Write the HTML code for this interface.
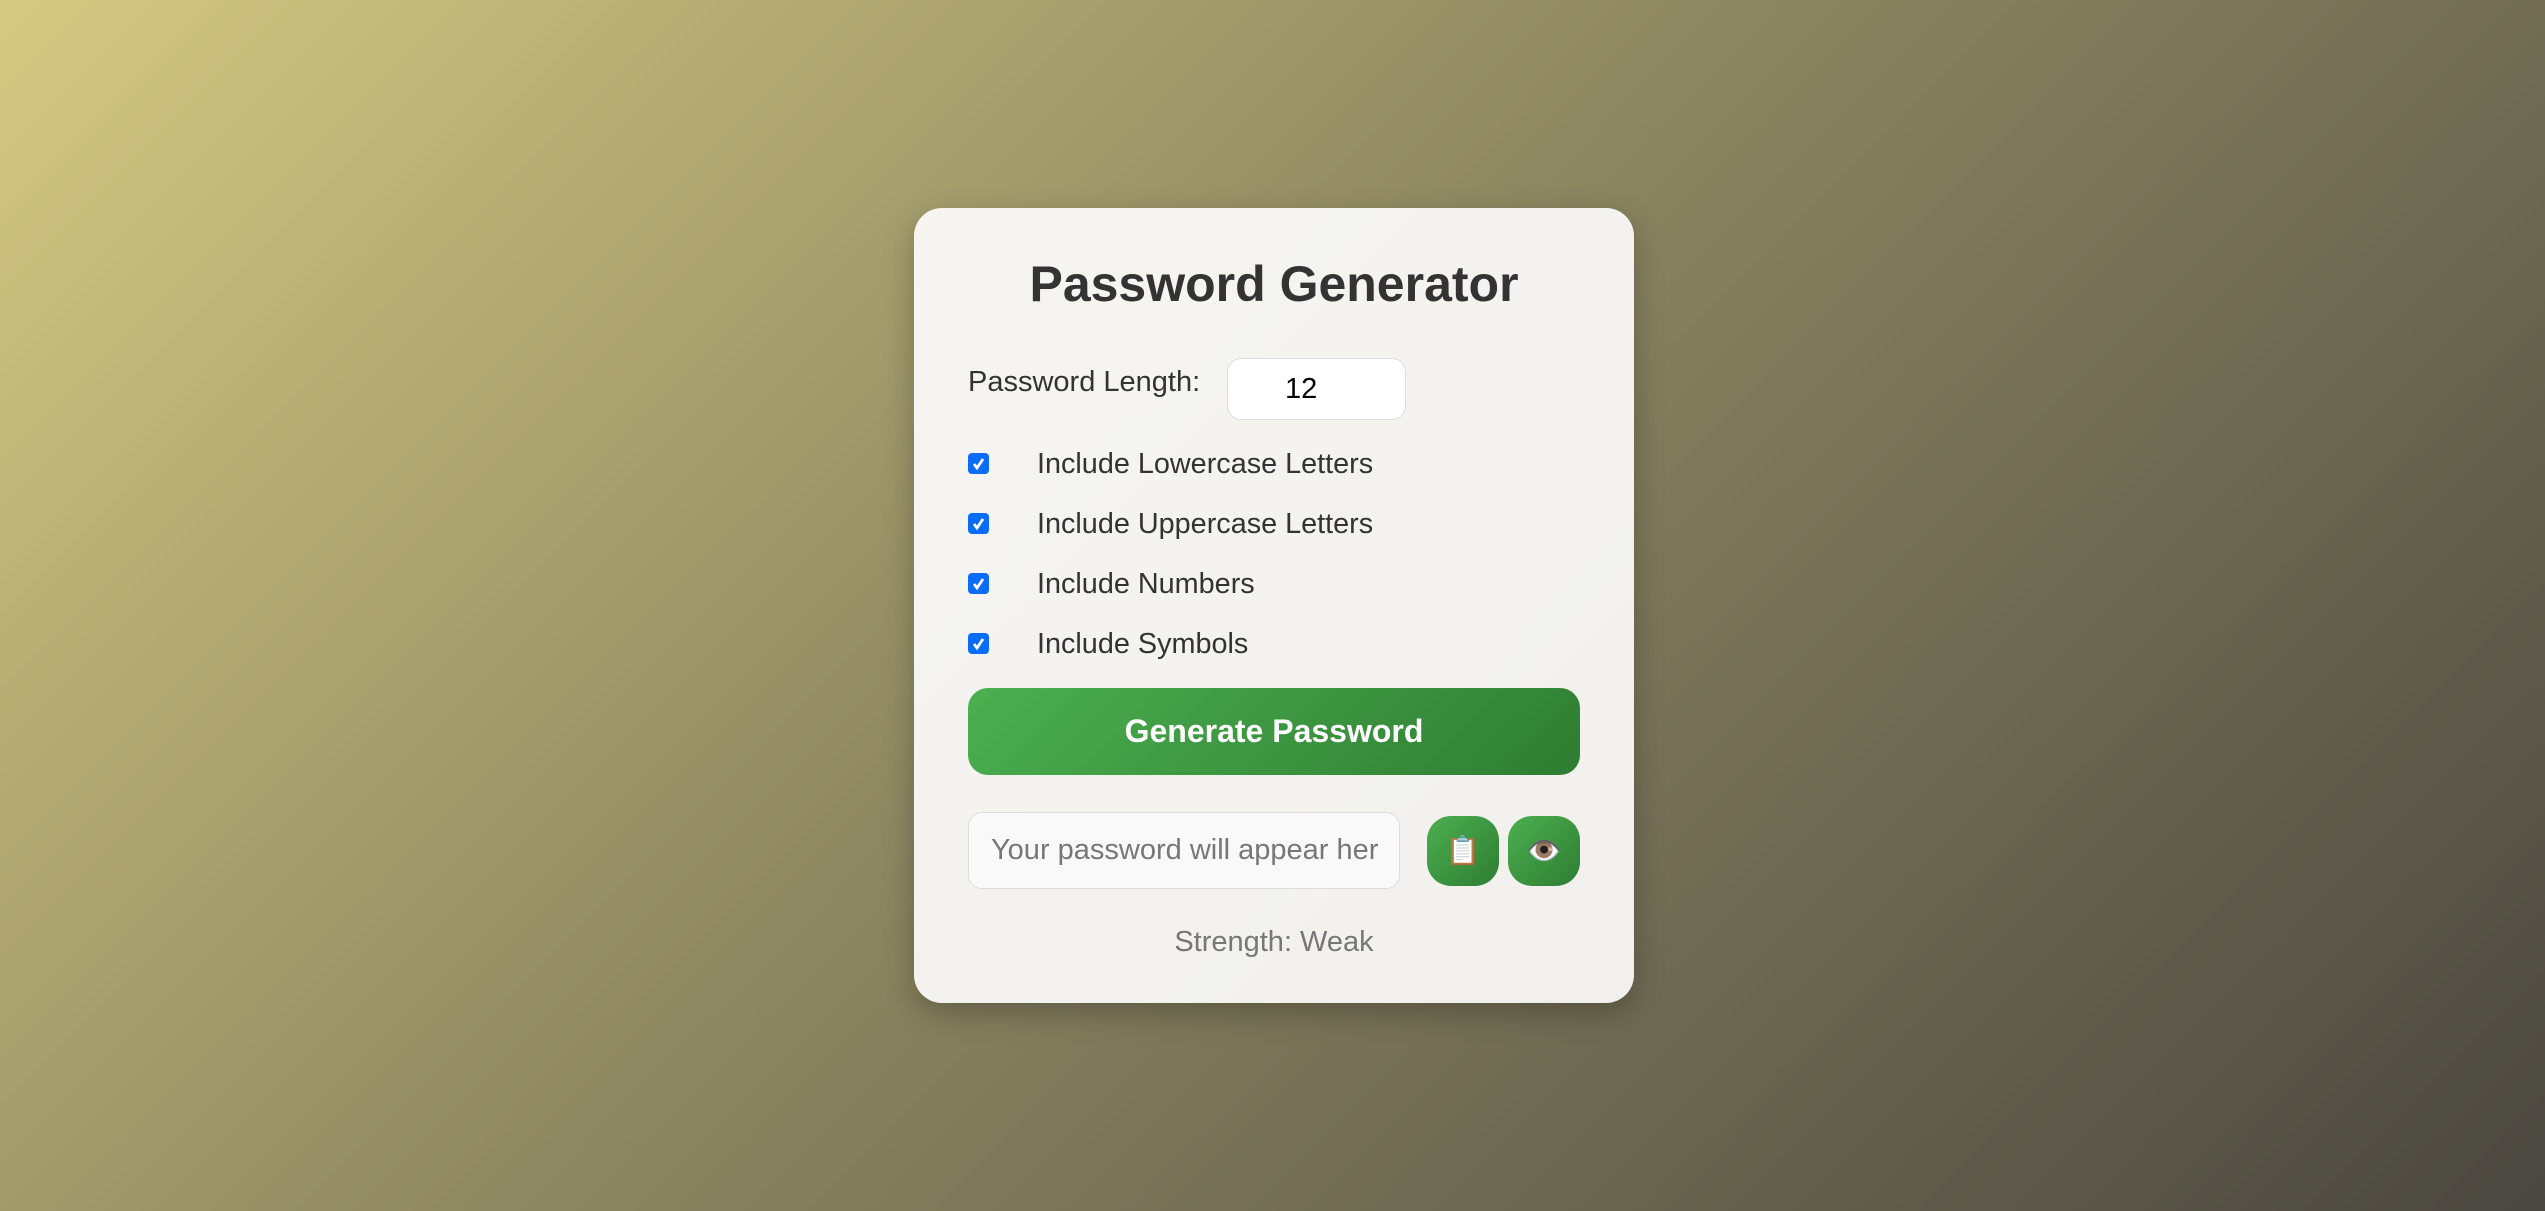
<!DOCTYPE html>
<html><head><meta charset="utf-8"><style>
html,body{margin:0;padding:0;width:2545px;height:1211px;overflow:hidden}
body{background:linear-gradient(135deg,#d4c982 0%,#8a8460 48%,#4a4741 100%);font-family:"Liberation Sans",Arial,sans-serif;position:relative}
.card{position:absolute;left:914px;top:208px;width:720px;height:795px;background:linear-gradient(135deg,#f6f5f1,#f1f0ed);border-radius:28px;box-shadow:0 10px 30px rgba(0,0,0,.25)}
h1{position:absolute;left:0;right:0;top:259px;margin:0;text-align:center;font-size:50px;font-weight:bold;color:#333;line-height:1;padding-left:3px}
.abs{position:absolute}
.lbl{left:968px;top:366px;font-size:29px;color:#333}
.num{left:1227px;top:358px;background:#fff;border:1px solid #ddd;border-radius:14px;line-height:60px;font-size:29px;color:#000;padding-left:57px;box-sizing:border-box;width:179px;height:62px}
.cb{left:968px;width:21px;height:21px;background:#0a6cff;border-radius:4px}
.cb svg{display:block}
.ct{left:1037px;font-size:28.8px;color:#333;line-height:1}
.gen{left:968px;top:688px;width:612px;height:87px;border-radius:20px;background:linear-gradient(135deg,#4caf50,#2e7d32);color:#fff;font-size:32px;font-weight:bold;text-align:center;line-height:87px}
.pw{left:968px;top:812px;background:#f9f9f9;border:1px solid #ddd;border-radius:14px;font-size:29px;color:#777;line-height:75px;padding-left:22px;box-sizing:border-box;width:432px;height:77px;white-space:nowrap}
.pw span{display:block;width:388px;overflow:hidden}
.ib{top:816px;width:72px;height:70px;border-radius:24px;background:linear-gradient(135deg,#4caf50,#2e7d32);text-align:center;line-height:70px;font-size:28px}
.st{left:914px;width:720px;top:926px;text-align:center;font-size:29px;color:#777}
</style></head><body>
<div class="card"></div>
<h1>Password Generator</h1>
<div class="abs lbl">Password Length:</div>
<div class="abs num">12</div>
<div class="abs cb" style="top:453px"><svg width="21" height="21"><path d="M6 11l3 4 6-9" stroke="#fff" stroke-width="2.8" fill="none"/></svg></div>
<div class="abs ct" style="top:450px">Include Lowercase Letters</div>
<div class="abs cb" style="top:513px"><svg width="21" height="21"><path d="M6 11l3 4 6-9" stroke="#fff" stroke-width="2.8" fill="none"/></svg></div>
<div class="abs ct" style="top:510px">Include Uppercase Letters</div>
<div class="abs cb" style="top:573px"><svg width="21" height="21"><path d="M6 11l3 4 6-9" stroke="#fff" stroke-width="2.8" fill="none"/></svg></div>
<div class="abs ct" style="top:570px">Include Numbers</div>
<div class="abs cb" style="top:633px"><svg width="21" height="21"><path d="M6 11l3 4 6-9" stroke="#fff" stroke-width="2.8" fill="none"/></svg></div>
<div class="abs ct" style="top:630px">Include Symbols</div>
<div class="abs gen">Generate Password</div>
<div class="abs pw"><span>Your password will appear here</span></div>
<div class="abs ib" style="left:1427px">📋</div>
<div class="abs ib" style="left:1508px">👁️</div>
<div class="abs st">Strength: Weak</div>
</body></html>
